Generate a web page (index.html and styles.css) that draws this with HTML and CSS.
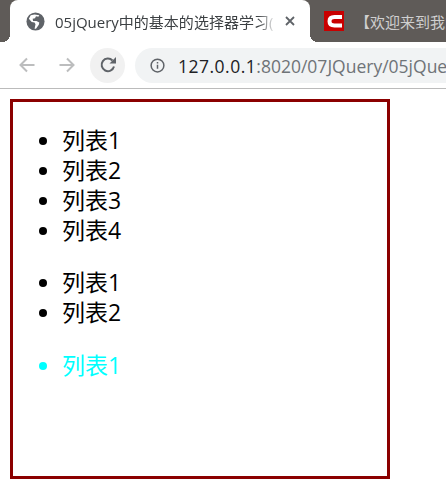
FILE: index.html
```html
<!DOCTYPE html>
<html lang="zh-CN">

<head>
    <meta charset="UTF-8">
    <title>05jQuery中的基本的选择器学习</title>
    <link rel="stylesheet" href="styles.css">
</head>

<body>
    <header class="browser">
        <div class="tabs">
            <div class="tab tab-active">
                <svg class="tab-icon" viewBox="0 0 20 20">
                    <circle cx="10" cy="10" r="9.5" fill="#5f6368" />
                    <path d="M9 2.500 5 3.500 3 7l3 3.500 3 .5 1 2-1 4.500h1.500l3-4 .5-2.500-3-1.500H7.500L7 7l2.500-.5 1-2L13 5l1-1.500Z" fill="#fff" />
                </svg>
                <span class="tab-title">05jQuery中的基本的选择器学习(</span>
                <svg class="tab-close" viewBox="0 0 10 10">
                    <path d="M1 1l8 8M9 1l-8 8" />
                </svg>
            </div>
            <div class="tab tab-other">
                <svg class="tab-logo" viewBox="0 0 20 20">
                    <rect width="20" height="20" fill="#c90000" />
                    <path d="M18 6H10.500C7 6 5.500 8 5.500 10.250S7 14.500 10.500 14.500H18" fill="none" stroke="#fff" stroke-width="4" />
                </svg>
                <span class="tab-title-other">【欢迎来到我的博客】</span>
            </div>
        </div>
        <div class="toolbar">
            <svg class="nav-icon" viewBox="0 0 18 18">
                <path d="M16.500 9H2.500M9 2.500 2.500 9 9 15.500" />
            </svg>
            <svg class="nav-icon" viewBox="0 0 18 18">
                <path d="M1.500 9h14M9 2.500 15.500 9 9 15.500" />
            </svg>
            <div class="reload">
                <svg viewBox="0 0 18 18" width="18" height="18">
                    <path class="reload-arc" d="M15 10.500A6.300 6.300 0 1 1 13.500 4.500" />
                    <path class="reload-head" d="M10.500 7.500h6.500V1Z" />
                </svg>
            </div>
            <div class="omnibox">
                <svg class="info-icon" viewBox="0 0 16 16">
                    <circle cx="8" cy="8" r="6.800" />
                    <path d="M8 7.200v4.300M8 4.300v1.500" />
                </svg>
                <span class="url"><span class="url-host">127.0.0.1</span>:8020/07JQuery/05jQuery中的基本的选择器学习.html</span>
            </div>
        </div>
    </header>

    <main class="box">
        <ul class="list">
            <li>列表1</li>
            <li>列表2</li>
            <li>列表3</li>
            <li>列表4</li>
        </ul>
        <ul class="list">
            <li>列表1</li>
            <li>列表2</li>
        </ul>
        <ul class="list list-cyan">
            <li>列表1</li>
        </ul>
    </main>
</body>

</html>
```

FILE: styles.css
```css
body {
    margin: 0;
    overflow: hidden;
    background-color: #fff;
    font-family: "Open Sans", "Noto Sans CJK SC", sans-serif;
}

.browser {
    border-bottom: 1px solid #bbb;
}

.tabs {
    display: flex;
    height: 42px;
    padding-left: 10px;
    background-color: #5f5b58;
    overflow: hidden;
}

.tab {
    display: flex;
    align-items: center;
    flex-shrink: 0;
}

.tab-active {
    position: relative;
    width: 300px;
    box-sizing: border-box;
    padding: 0 15px 0 16px;
    background-color: #fff;
    border-radius: 8px 8px 0 0;
}

.tab-active::before,
.tab-active::after {
    content: "";
    position: absolute;
    bottom: 0;
    width: 8px;
    height: 8px;
}

.tab-active::before {
    left: -8px;
    background: radial-gradient(circle at 0 0, transparent 8px, #fff 8px);
}

.tab-active::after {
    right: -8px;
    background: radial-gradient(circle at 100% 0, transparent 8px, #fff 8px);
}

.tab-icon {
    width: 19px;
    height: 19px;
    flex-shrink: 0;
}

.tab-title {
    flex: 1;
    margin: 0 9px 0 10px;
    font-size: 15px;
    color: #3c4043;
    white-space: nowrap;
    overflow: hidden;
    -webkit-mask-image: linear-gradient(to left, transparent 0, #000 18px);
    mask-image: linear-gradient(to left, transparent 0, #000 18px);
}

.tab-close {
    width: 10px;
    height: 10px;
    flex-shrink: 0;
    fill: none;
    stroke: #5f6368;
    stroke-width: 1.800;
}

.tab-other {
    padding-left: 14px;
}

.tab-logo {
    width: 20px;
    height: 20px;
    flex-shrink: 0;
}

.tab-title-other {
    margin-left: 11px;
    font-size: 15px;
    color: #cfcfcf;
    white-space: nowrap;
}

.toolbar {
    display: flex;
    align-items: center;
    height: 46px;
    padding-left: 18px;
    overflow: hidden;
}

.nav-icon {
    width: 18px;
    height: 18px;
    margin-right: 22px;
    flex-shrink: 0;
    fill: none;
    stroke: #bcbdbe;
    stroke-width: 2;
}

.reload {
    display: flex;
    align-items: center;
    justify-content: center;
    width: 35px;
    height: 35px;
    margin-left: -8px;
    flex-shrink: 0;
    background-color: #f1f1f1;
    border-radius: 50%;
}

.reload-arc {
    fill: none;
    stroke: #5f6368;
    stroke-width: 2;
}

.reload-head {
    fill: #5f6368;
}

.omnibox {
    display: flex;
    align-items: center;
    flex: 1;
    min-width: 0;
    height: 35px;
    margin-left: 10px;
    padding-left: 15px;
    background-color: #f1f3f4;
    border-radius: 18px 0 0 18px;
}

.info-icon {
    width: 15px;
    height: 15px;
    flex-shrink: 0;
    fill: none;
    stroke: #5f6368;
    stroke-width: 1.600;
}

.url {
    margin-left: 13px;
    font-size: 17.5px;
    color: #6f7478;
    white-space: nowrap;
}

.url-host {
    color: #202124;
    letter-spacing: 0.5px;
}

.box {
    width: 374px;
    height: 374px;
    margin: 10px;
    border: 3px solid #8b0000;
    overflow: hidden;
}

.list {
    margin: 22.5px 0;
    padding-left: 49px;
    font-size: 23px;
    line-height: 30px;
}

.list-cyan {
    color: #00ffff;
}
```
